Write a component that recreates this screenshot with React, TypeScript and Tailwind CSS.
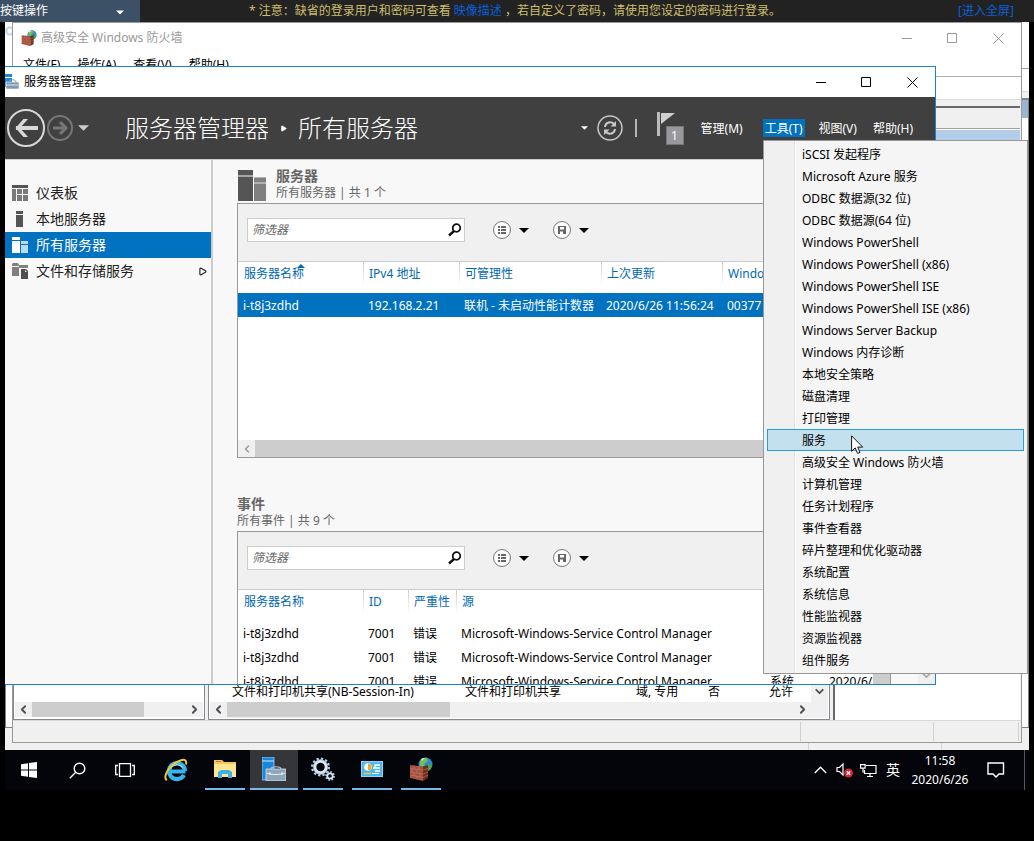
import { ChevronDown, ChevronLeft, ChevronRight, Play } from "lucide-react"
import type { ReactNode } from "react"

const tools = [
  "iSCSI 发起程序",
  "Microsoft Azure 服务",
  "ODBC 数据源(32 位)",
  "ODBC 数据源(64 位)",
  "Windows PowerShell",
  "Windows PowerShell (x86)",
  "Windows PowerShell ISE",
  "Windows PowerShell ISE (x86)",
  "Windows Server Backup",
  "Windows 内存诊断",
  "本地安全策略",
  "磁盘清理",
  "打印管理",
  "服务",
  "高级安全 Windows 防火墙",
  "计算机管理",
  "任务计划程序",
  "事件查看器",
  "碎片整理和优化驱动器",
  "系统配置",
  "系统信息",
  "性能监视器",
  "资源监视器",
  "组件服务",
]

const activeTool = "服务"

const events = [
  { key: 1, server: "i-t8j3zdhd", id: 7001 },
  { key: 2, server: "i-t8j3zdhd", id: 7001 },
  { key: 3, server: "i-t8j3zdhd", id: 7001, log: "系统", date: "2020/6/26" },
]

function Triangle({ className }: { className: string }) {
  return (
    <svg viewBox="0 0 10 5" className={className} fill="currentColor">
      <path d="M0 0h10L5 5z" />
    </svg>
  )
}

function WindowControls({ className }: { className: string }) {
  return (
    <div className={`ml-auto flex h-full ${className}`}>
      <button type="button" aria-label="最小化" className="flex w-[46px] items-center justify-center">
        <svg width="11" height="11" stroke="currentColor">
          <path d="M0 5.500h10" />
        </svg>
      </button>
      <button type="button" aria-label="最大化" className="flex w-[45px] items-center justify-center">
        <svg width="11" height="11" stroke="currentColor" fill="none">
          <path d="M.5 .5h9v9h-9z" />
        </svg>
      </button>
      <button type="button" aria-label="关闭" className="flex w-[46px] items-center justify-center">
        <svg width="11" height="11" stroke="currentColor">
          <path d="M.5 .5l10 10M10.500 .5l-10 10" />
        </svg>
      </button>
    </div>
  )
}

function ServerToolbox({ className }: { className: string }) {
  return (
    <svg viewBox="0 0 24 24" className={className}>
      <path d="M0 0h12v23H0z" fill="#1b87d9" stroke="#9fd0f2" strokeWidth=".8" />
      <path d="M0 4h12" stroke="#cfe8fa" />
      <path d="M4 12h20v12H4z" fill="#8fa6b8" stroke="#dbe5ec" strokeWidth=".8" />
      <path d="M9 12c0-3 10-3 10 0" fill="none" stroke="#b8c8d4" strokeWidth="1.200" />
      <path d="M5 16c4 2 14 2 18 0M8 15v3M20 15v3" fill="none" stroke="#eef3f7" />
    </svg>
  )
}

function Firewall({ className }: { className: string }) {
  return (
    <svg viewBox="0 0 24 24" className={className}>
      <circle cx="16.500" cy="7.500" r="7" fill="#2f86d8" />
      <path d="M11 4c2-3 5-3.500 7-3l1 3-3 2-1 3-4 1z" fill="#6dc24a" />
      <path d="M19 7l4 1c-.3 3-2 5-4 6l-2-4z" fill="#4aa838" />
      <path d="M12 2c2-1 3-1 4-1l-3 3z" fill="#cdeffb" />
      <path d="M1 8l13 1.500V24L1 21z" fill="#a5513d" />
      <path d="M14 9.500l5-1.500v13l-5 3z" fill="#702a1e" />
      <path
        d="M1 11.500l13 1.500 5-1.500M1 15l13 2 5-2M1 18l13 2.500 5-2.500M5 8.500v3.500M10 9v3.500M3 12v3M8 12.500v3.500M5 16v3M11 17v3M8 19v3.500"
        fill="none"
        stroke="#c58672"
        strokeWidth=".5"
      />
    </svg>
  )
}

function Gears({ className }: { className: string }) {
  return (
    <svg viewBox="0 0 24 24" className={className} fill="none">
      <circle cx="9.500" cy="10" r="8" stroke="#b9d0df" strokeWidth="3" strokeDasharray="2.200 2" />
      <circle cx="9.500" cy="10" r="5.800" stroke="#d8e7f1" strokeWidth="3.200" />
      <circle cx="9.500" cy="10" r="7.300" stroke="#7799b0" strokeWidth=".6" />
      <circle cx="19" cy="19" r="4" stroke="#a3bccd" strokeWidth="2" strokeDasharray="1.600 1.500" />
      <circle cx="19" cy="19" r="2.700" stroke="#d8e7f1" strokeWidth="1.800" />
    </svg>
  )
}

function ServersIcon({ className, front, back }: { className: string; front: string; back: string }) {
  return (
    <svg viewBox="0 0 28 31" className={className}>
      <path d="M0 0h15v5H0zM0 7h15v24H0z" fill={front} />
      <path d="M0 5h15v2H0z" fill="#a6a6a6" />
      <path d="M16 8h12v4H16zM16 14h12v17H16z" fill={back} />
      <path d="M16 7h12v1H16zM16 12h12v2H16z" fill="#b3b3b3" />
    </svg>
  )
}

function HScroll({ thumb }: { thumb: string }) {
  return (
    <div className="flex h-[15px] flex-1 items-center bg-[#f0f0f0] text-[#505050]">
      <span className="flex w-[17px] justify-center">
        <ChevronLeft size={13} strokeWidth={3.5} />
      </span>
      <div className={`h-full bg-[#cdcdcd] ${thumb}`} />
      <span className="ml-auto flex w-[17px] justify-center">
        <ChevronRight size={13} strokeWidth={3.5} />
      </span>
    </div>
  )
}

function ServicesWindow() {
  return (
    <div className="absolute inset-0 flex flex-col bg-white">
      <div className="h-[47px] border-b border-[#a0a0a0]">
        <Gears className="mt-1 h-3 w-3" />
      </div>
      <div className="h-[23px] border-b border-[#d9d9d9]" />
      <div className="h-[6px] bg-[#f0f0f0]" />
      <div className="flex flex-1 flex-col border border-t-2 border-[#828282]">
        <div className="ml-auto h-[18px] w-[10px] bg-[#9ab4d3]" />
      </div>
      <div className="flex h-[22px] bg-[#f0f0f0]">
        <div className="flex-1" />
        <div className="w-[133px] border-l border-[#d5d5d5]" />
        <div className="w-[88px] border-l border-[#d5d5d5]" />
      </div>
    </div>
  )
}

function FirewallWindow() {
  return (
    <div className="absolute inset-x-[7px] top-0 bottom-[7px] flex flex-col border border-[#999] bg-white">
      <div className="flex h-[30px] items-center pl-2 text-[#999]">
        <Firewall className="mr-1 h-4 w-4" />
        高级安全 Windows 防火墙
        <WindowControls className="text-[#999]" />
      </div>
      <nav className="flex h-6 items-center gap-[17px] border-b border-[#b0b0b0] pl-[10px]">
        <button type="button">文件(F)</button>
        <button type="button">操作(A)</button>
        <button type="button">查看(V)</button>
        <button type="button">帮助(H)</button>
      </nav>
      <div className="h-[23px] border-b border-[#dcdcdc]" />
      <div className="flex flex-1 gap-[3px] bg-[#f0f0f0] pt-[6px]">
        <div className="flex w-[192px] flex-col justify-end border border-[#828790] bg-white p-px">
          <div className="flex pb-px">
            <HScroll thumb="w-28" />
          </div>
        </div>
        <div className="flex min-w-0 flex-1 flex-col border border-[#828790] bg-white p-px">
          <div className="flex flex-1">
            <table className="mt-auto flex-1 table-fixed whitespace-nowrap">
              <colgroup>
                <col className="w-[255px]" />
                <col className="w-[171px]" />
                <col className="w-[72px]" />
                <col className="w-[61px]" />
                <col />
              </colgroup>
              <tbody>
                <tr className="h-5">
                  <td className="pl-[22px]">文件和打印机共享(NB-Session-In)</td>
                  <td>文件和打印机共享</td>
                  <td>域, 专用</td>
                  <td>否</td>
                  <td>允许</td>
                </tr>
              </tbody>
            </table>
            <div className="flex w-[17px] items-end justify-center bg-[#f0f0f0] pb-1 text-[#505050]">
              <ChevronDown size={13} strokeWidth={3.5} />
            </div>
          </div>
          <div className="flex bg-[#f0f0f0] pb-px">
            <HScroll thumb="w-[223px]" />
            <div className="w-[17px]" />
          </div>
        </div>
        <div className="mr-px w-[187px] border-t-2 border-l-2 border-[#696969] bg-white">
          <div className="h-[21px] border-b border-[#a0a0a0] bg-[#f0f0f0]" />
          <div className="mt-px h-5 bg-[#b3cde8]" />
        </div>
      </div>
      <div className="flex h-[22px] border-t border-[#d8d8d8] bg-[#f0f0f0] py-px">
        <div className="flex-1" />
        <div className="w-[133px] border-l border-[#d0d0d0]" />
        <div className="mr-[2px] w-[86px] border-x border-[#d0d0d0]" />
      </div>
    </div>
  )
}

function ManagerHeader() {
  return (
    <div className="flex h-[63px] items-center border-b border-[#ccc] bg-[#404040] pr-5 text-white">
      <button type="button" aria-label="后退" className="ml-[2px]">
        <svg width="38" height="38" fill="none" stroke="#d9d9d9">
          <circle cx="19" cy="19" r="18" strokeWidth="2" />
          <path d="M9 19h22" strokeWidth="4" />
          <path d="M21 10h-4.500L8.500 19l8 9H21l-8-9z" fill="#d9d9d9" stroke="none" />
        </svg>
      </button>
      <button type="button" aria-label="前进" className="ml-[2px]">
        <svg width="26" height="26" fill="none" stroke="#777">
          <circle cx="13" cy="13" r="12" strokeWidth="2" />
          <path d="M6 13h13" strokeWidth="3" />
          <path d="M13 7l6 6-6 6" strokeWidth="3" />
        </svg>
      </button>
      <button type="button" aria-label="历史记录" className="ml-[5px]">
        <Triangle className="h-[6px] w-[11px] text-[#ccc]" />
      </button>
      <h1 className="ml-9 flex items-center text-2xl font-light whitespace-nowrap">
        服务器管理器
        <Play size={7} fill="currentColor" className="mx-[11px]" />
        所有服务器
      </h1>
      <div className="ml-auto flex items-center">
        <Triangle className="h-1 w-[7px]" />
        <button type="button" aria-label="刷新" className="ml-2">
          <svg width="28" height="28" fill="none" stroke="#c8c8c8">
            <circle cx="14" cy="14" r="12" strokeWidth="1.500" />
            <path d="M9 13c.5-5 6-6 9-3M19 15c-.5 5-6 6-9 3" strokeWidth="2" />
            <path d="M20 7v5.500h-5.500zM8 21v-5.500h5.500z" fill="#c8c8c8" stroke="none" />
          </svg>
        </button>
        <div className="ml-[11px] h-[18px] w-[2px] bg-[#b5b5b5]" />
        <button type="button" className="relative ml-5 h-9 w-7 text-xs" aria-label="通知 1">
          <svg width="18" height="25" className="-mt-2">
            <path d="M0 0h3v24H0z" fill="#bbb" />
            <path d="M4 1h14L4 12z" fill="#d0d0d0" />
          </svg>
          <span className="absolute top-4 left-[9px] flex h-[19px] w-[18px] items-center justify-center border border-[#777] bg-[#98989d]">
            1
          </span>
        </button>
        <nav className="ml-[14px] flex gap-3">
          <button type="button" className="px-[2px] pt-[2px]">管理(M)</button>
          <button type="button" className="ml-[6px] bg-[#0072bf] px-[2px] pt-[2px]">工具(T)</button>
          <button type="button" className="px-[2px] pt-[2px]">视图(V)</button>
          <button type="button" className="px-[2px] pt-[2px]">帮助(H)</button>
        </nav>
      </div>
    </div>
  )
}

function NavItem({ icon, label, active, arrow }: { icon: ReactNode; label: string; active?: boolean; arrow?: boolean }) {
  return (
    <li>
      <button
        type="button"
        className={`flex h-[26px] w-full items-center gap-2 pl-[7px] text-sm ${
          active ? "bg-[#0072bf] text-white" : "text-[#222]"
        }`}
      >
        {icon}
        {label}
        {arrow && <Play size={9} strokeWidth={3} className="mr-1 ml-auto" />}
      </button>
    </li>
  )
}

function Sidebar() {
  return (
    <aside className="w-[208px] shrink-0 border-r-2 border-[#ccc] pt-5">
      <ul>
        <NavItem
          label="仪表板"
          icon={
            <svg width="16" height="16">
              <path d="M0 0h16v3H0z" fill="#555" />
              <path d="M0 4h4v12H0zM5 4h5v5H5zM11 4h5v5h-5zM5 10h5v6H5zM11 10h5v6h-5z" fill="#7a7a7a" />
            </svg>
          }
        />
        <NavItem
          label="本地服务器"
          icon={
            <svg width="16" height="16">
              <path d="M4 0h7v3H4zM4 4h7v12H4z" fill="#555" />
            </svg>
          }
        />
        <NavItem
          active
          label="所有服务器"
          icon={
            <svg width="16" height="16">
              <path d="M0 0h8v3H0zM0 4h8v12H0z" fill="#fff" />
              <path d="M9 4h7v3H9zM9 8h7v8H9z" fill="#b9dcf2" />
            </svg>
          }
        />
        <NavItem
          arrow
          label="文件和存储服务"
          icon={
            <svg width="16" height="16">
              <path d="M0 1l1-1h5l1 2h9v3H7v8H0V4h7V3H0z" fill="#808080" />
              <path d="M9 6h5l2 2v8H9z" fill="#505050" />
              <path d="M13 7v2h2z" fill="#eee" />
            </svg>
          }
        />
      </ul>
    </aside>
  )
}

function FilterBar({ id }: { id: string }) {
  return (
    <div className="flex h-[58px] items-start border-b border-[#ccc] bg-[#f0f0f0] pt-[14px] pl-[9px]">
      <div className="flex h-6 w-[218px] items-center border border-[#ccc] bg-white pr-[2px]">
        <input
          id={id}
          type="text"
          aria-label="筛选器"
          placeholder="筛选器"
          className="min-w-0 flex-1 pl-1 italic placeholder-[#666] focus:outline-none"
        />
        <svg width="14" height="14" fill="none" stroke="#111">
          <circle cx="8.500" cy="5" r="3.800" strokeWidth="1.800" />
          <path d="M6 8l-5 4.500" strokeWidth="2.400" />
        </svg>
      </div>
      <button type="button" aria-label="保存的查询" className="ml-[27px] flex h-6 items-center gap-[7px]">
        <svg width="20" height="20">
          <circle cx="10" cy="10" r="8.500" fill="#fff" stroke="#777" />
          <path d="M6 6h2v2H6zM9 6h5v2H9zM6 9h2v2H6zM9 9h5v2H9zM6 12h2v2H6zM9 12h5v2H9z" fill="#666" />
        </svg>
        <Triangle className="h-[5px] w-[10px]" />
      </button>
      <button type="button" aria-label="保存" className="ml-[23px] flex h-6 items-center gap-[7px]">
        <svg width="20" height="20">
          <circle cx="10" cy="10" r="8.500" fill="#fff" stroke="#777" />
          <path d="M6 6h8v8H6z" fill="#666" />
          <path d="M8 7h4v2.500H8zM8 11.500h3V14H8z" fill="#fff" />
        </svg>
        <Triangle className="h-[5px] w-[10px]" />
      </button>
    </div>
  )
}

function Th({ children, first }: { children?: ReactNode; first?: boolean }) {
  return (
    <th
      className={`relative h-[31px] pl-[6px] text-left align-top leading-[23px] font-normal text-[#0068b3] ${
        first ? "" : "bg-[linear-gradient(#ccc,#fff)] bg-[length:1px_24px] bg-no-repeat"
      }`}
    >
      {children}
    </th>
  )
}

function Td({ children }: { children?: ReactNode }) {
  return <td className="overflow-hidden pt-[2px] pl-[5px]">{children}</td>
}

function ServersPanel() {
  return (
    <section>
      <div className="mb-[3px] flex h-8 gap-[10px] pl-px text-[#666]">
        <ServersIcon className="mt-[2px] h-[31px] w-7" front="#555" back="#808080" />
        <div>
          <h2 className="text-sm leading-4 font-bold">服务器</h2>
          <p className="leading-[18px]">所有服务器 | 共 1 个</p>
        </div>
      </div>
      <div className="flex h-[255px] flex-col border border-[#999] bg-white">
        <FilterBar id="server-filter" />
        <table className="w-full table-fixed whitespace-nowrap">
          <colgroup>
            <col className="w-[125px]" />
            <col className="w-[96px]" />
            <col className="w-[142px]" />
            <col className="w-[121px]" />
            <col />
          </colgroup>
          <thead>
            <tr>
              <Th first>
                服务器名称
                <svg viewBox="0 0 8 4" className="absolute top-[2px] left-[59px] h-1 w-2">
                  <path d="M0 4h8L4 0z" fill="#0068b3" />
                </svg>
              </Th>
              <Th>IPv4 地址</Th>
              <Th>可管理性</Th>
              <Th>上次更新</Th>
              <Th>Windows</Th>
            </tr>
          </thead>
          <tbody>
            <tr className="h-6 bg-[#0072bf] text-white">
              <Td>i-t8j3zdhd</Td>
              <Td>192.168.2.21</Td>
              <Td>联机 - 未启动性能计数器</Td>
              <Td>2020/6/26 11:56:24</Td>
              <Td>00377</Td>
            </tr>
          </tbody>
        </table>
        <div className="mt-auto flex h-[17px] bg-[#cdcdcd]">
          <span className="flex w-[17px] items-center justify-center bg-[#f0f0f0] text-[#999]">
            <ChevronLeft size={12} strokeWidth={3} />
          </span>
        </div>
      </div>
    </section>
  )
}

function EventsPanel() {
  return (
    <section className="mt-[38px]">
      <div className="mb-[3px] h-8 text-[#666]">
        <h2 className="text-sm leading-4 font-bold">事件</h2>
        <p className="leading-[18px]">所有事件 | 共 9 个</p>
      </div>
      <div className="border border-[#999] bg-white">
        <FilterBar id="event-filter" />
        <div className="flex">
          <div className="min-w-0 flex-1">
            <table className="w-full table-fixed whitespace-nowrap">
              <colgroup>
                <col className="w-[125px]" />
                <col className="w-[45px]" />
                <col className="w-12" />
                <col className="w-[309px]" />
                <col className="w-[59px]" />
                <col />
              </colgroup>
              <thead>
                <tr>
                  <Th first>服务器名称</Th>
                  <Th>ID</Th>
                  <Th>严重性</Th>
                  <Th>源</Th>
                  <Th />
                  <Th />
                </tr>
              </thead>
              <tbody>
                {events.map((event) => (
                  <tr key={event.key} className="h-6">
                    <Td>{event.server}</Td>
                    <Td>{event.id}</Td>
                    <Td>错误</Td>
                    <Td>Microsoft-Windows-Service Control Manager</Td>
                    <Td>{event.log}</Td>
                    <Td>{event.date}</Td>
                  </tr>
                ))}
              </tbody>
            </table>
          </div>
          <div className="w-[17px] bg-[#cdcdcd]" />
        </div>
      </div>
    </section>
  )
}

function ServerManagerWindow() {
  return (
    <div className="absolute top-[44px] right-[93px] bottom-[65px] left-0 flex flex-col overflow-hidden border border-l-0 border-[#1883d7] bg-white">
      <div className="flex h-[30px] shrink-0 items-center">
        <svg width="14" height="16" className="mr-[5px]">
          <path d="M0 0h7v3H0zM0 4h7v9H0z" fill="#1b87d9" />
          <path d="M1 8h13v7H1z" fill="#7f98ab" stroke="#fff" strokeWidth=".6" />
          <path d="M4 8c0-3 7-3 7 0" fill="none" stroke="#7f98ab" />
          <path d="M1 11h12" stroke="#dfe8ee" />
        </svg>
        服务器管理器
        <WindowControls className="text-black" />
      </div>
      <div className="shrink-0">
        <ManagerHeader />
      </div>
      <div className="flex min-h-0 flex-1 bg-[#f8f8f8]">
        <Sidebar />
        <main className="min-w-0 flex-1 overflow-hidden pt-2 pr-[27px] pl-6">
          <ServersPanel />
          <EventsPanel />
        </main>
        <div className="flex w-[17px] items-end justify-center bg-[#f0f0f0] pb-[2px] text-[#aaa]">
          <ChevronDown size={13} strokeWidth={3} />
        </div>
      </div>
    </div>
  )
}

function ToolsMenu() {
  return (
    <ul
      role="menu"
      className="absolute top-[118px] right-px w-[265px] border border-[#979797] bg-[#f5f5f5] bg-[linear-gradient(90deg,#f0f0f0_30px,#e0e0e0_30px,#e0e0e0_31px,#fff_31px,#fff_32px,#f5f5f5_32px)] px-[3px] py-[2px]"
    >
      {tools.map((tool) => (
        <li key={tool} role="none">
          <button
            type="button"
            role="menuitem"
            className={`flex h-[22px] w-full items-center border pt-[2px] pl-[34px] ${
              tool === activeTool ? "border-[#26a0da] bg-[#c3e0ee]" : "border-transparent"
            }`}
          >
            {tool}
          </button>
        </li>
      ))}
    </ul>
  )
}

function TaskButton({ label, running, active, children }: { label: string; running?: boolean; active?: boolean; children: ReactNode }) {
  return (
    <button
      type="button"
      aria-label={label}
      className={`flex h-10 w-12 flex-col items-center ${active ? "bg-[#343639]" : ""}`}
    >
      <span className="flex flex-1 items-center">{children}</span>
      {running && <span className={`h-[2px] bg-[#76b9ed] ${active ? "w-12" : "w-10"}`} />}
    </button>
  )
}

function Taskbar() {
  return (
    <footer className="flex h-10 items-center bg-[#03050a] text-white">
      <TaskButton label="开始">
        <svg width="16" height="16" fill="#fff">
          <path d="M0 2.200l7-1V7.500H0zM8 1l8-1v7.500H8zM0 8.500h7v6.300l-7-1zM8 8.500h8V16l-8-1.100z" />
        </svg>
      </TaskButton>
      <TaskButton label="搜索">
        <svg width="17" height="17" fill="none" stroke="#fff" strokeWidth="1.400">
          <circle cx="10.500" cy="6.500" r="5.300" />
          <path d="M6.500 10.500L.8 16.200" />
        </svg>
      </TaskButton>
      <TaskButton label="任务视图">
        <svg width="20" height="14" fill="none" stroke="#fff" strokeWidth="1.300">
          <path d="M4.500 .7h11v12.600h-11zM3 2.500H.7v9H3M17 2.500h2.300v9H17" />
        </svg>
      </TaskButton>
      <div className="ml-[3px] flex gap-px">
        <TaskButton label="Internet Explorer">
          <svg width="24" height="24" fill="none">
            <path d="M6 13.500h15.500M20 17a8 8 0 1 1 1-4" stroke="#36b4ee" strokeWidth="4.200" />
            <path d="M6.500 10.500c1.500-4 9-5.500 12-1" stroke="#a6e4ff" strokeWidth="1.200" />
            <path d="M3 22C-2 20 5 7 14 3.500c6-3 9-2 8 3" stroke="#f4c430" strokeWidth="2" />
          </svg>
        </TaskButton>
        <TaskButton label="文件资源管理器" running>
          <svg width="22" height="20">
            <path d="M0 1h8l2 2h12v15H0z" fill="#f2cb57" />
            <path d="M0 5h22v13H0z" fill="#ffe694" />
            <path d="M4 19v-6l3-2h8l3 2v6h-4v-4H8v4z" fill="#3fb1e6" />
            <path d="M2 2h5v1H2z" fill="#e06e4a" />
          </svg>
        </TaskButton>
        <TaskButton label="服务器管理器" running active>
          <ServerToolbox className="h-6 w-6" />
        </TaskButton>
        <TaskButton label="服务" running>
          <Gears className="h-6 w-6" />
        </TaskButton>
        <TaskButton label="控制面板" running>
          <svg width="22" height="16">
            <path d="M0 0h22v16H0z" fill="#8fd3f7" />
            <path d="M1 1h20v14H1z" fill="#4ab7ee" />
            <circle cx="7" cy="6" r="3.800" fill="#fff" />
            <path d="M7 6V2.500A3.500 3.500 0 0 1 7 9.500z" fill="#f5a623" />
            <path d="M12 7h2V4h5M14 7h5M14 10h5" stroke="#fff" strokeWidth="1.300" fill="none" />
            <path d="M3 12.500h7" stroke="#ffc53d" strokeWidth="1.500" />
            <path d="M11 12.500h7" stroke="#fff" />
          </svg>
        </TaskButton>
        <TaskButton label="高级安全 Windows 防火墙" running>
          <Firewall className="h-6 w-6" />
        </TaskButton>
      </div>

      <div className="ml-auto flex items-center">
        <svg width="13" height="8" fill="none" stroke="#fff" strokeWidth="1.400">
          <path d="M.8 7l5.700-5.700L12.200 7" />
        </svg>
        <svg width="18" height="16" className="ml-[9px]" fill="none">
          <path d="M1 5.500h2.500L7 2v11L3.500 9.500H1z" stroke="#fff" strokeWidth="1.200" />
          <circle cx="12.500" cy="11" r="4.500" fill="#d9252f" />
          <path d="M10.800 9.300l3.400 3.400M14.200 9.300l-3.400 3.400" stroke="#fff" strokeWidth="1.300" />
        </svg>
        <svg width="17" height="15" className="ml-[6px]" fill="none" stroke="#fff" strokeWidth="1.200">
          <path d="M6 2.500h10v8H4.500V7M7 13.500h6M10 10.500v3M.6 1.600h4.500v3.500H.6zM3 5v4.500" />
        </svg>
        <span className="ml-[9px] text-sm">英</span>
        <div className="flex w-20 flex-col text-center leading-[19px]">
          <span>11:58</span>
          <span>2020/6/26</span>
        </div>
        <button type="button" aria-label="操作中心" className="ml-[7px]">
          <svg width="18" height="18" fill="none" stroke="#fff" strokeWidth="1.400">
            <path d="M1 2h15.500v11H12l-3 3-3-3H1z" />
          </svg>
        </button>
        <div className="mr-1 ml-[19px] h-10 w-px bg-[#55585c]" />
      </div>
    </footer>
  )
}

function Cursor() {
  return (
    <svg width="13" height="20" className="absolute top-[413px] left-[846px]">
      <path d="M.6 .8v15.500l3.600-3.400 2.400 5.500 2.400-1-2.300-5.300h5z" fill="#fff" stroke="#111" />
    </svg>
  )
}

export default function App() {
  return (
    <div className="min-h-screen bg-black font-['Noto_Sans','Noto_Sans_CJK_SC',sans-serif] text-xs text-black">
      <header className="flex h-[22px] items-center bg-[#222]">
        <div className="flex-1">
          <div className="relative w-[140px]">
            <select
              aria-label="按键操作"
              className="block h-[22px] w-full appearance-none bg-[#3d5166] text-white focus:outline-none"
            >
              <option>按键操作</option>
            </select>
            <Triangle className="pointer-events-none absolute top-[10px] right-4 h-[5px] w-2 text-white" />
          </div>
        </div>
        <p className="pr-1 whitespace-nowrap text-[#cdbf6d]">
          * 注意：缺省的登录用户和密码可查看{" "}
          <a href="#image" className="text-[#0a5fd8]">
            映像描述
          </a>{" "}
          ，若自定义了密码，请使用您设定的密码进行登录。
        </p>
        <div className="flex flex-1 justify-end">
          <a href="#fullscreen" className="mr-5 text-[#0a5fd8]">
            [进入全屏]
          </a>
        </div>
      </header>
      <div className="mx-[5px]">
        <div className="relative h-[728px] overflow-hidden">
          <ServicesWindow />
          <FirewallWindow />
          <ServerManagerWindow />
          <ToolsMenu />
          <Cursor />
        </div>
        <Taskbar />
      </div>
    </div>
  )
}
